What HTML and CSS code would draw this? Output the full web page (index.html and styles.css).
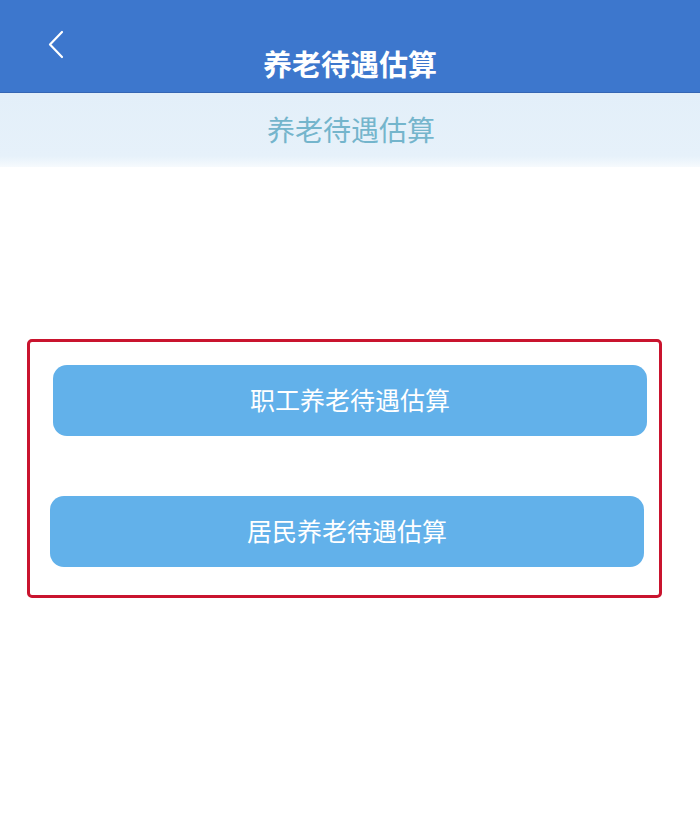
FILE: index.html
```html
<!DOCTYPE html>
<html lang="zh-CN">
<head>
<meta charset="utf-8">
<title>养老待遇估算</title>
<link rel="stylesheet" href="styles.css">
</head>
<body>
<div class="page">
  <header class="topbar">
    <span class="back" aria-label="返回">
      <svg width="20" height="30" viewBox="0 0 20 30"><path d="M16 2 L4 14.5 L16 27" fill="none" stroke="#ffffff" stroke-width="2.2" stroke-linecap="round" stroke-linejoin="round"/></svg>
    </span>
    <h1 class="title">养老待遇估算</h1>
    <span class="spacer"></span>
  </header>
  <div class="band">养老待遇估算</div>
  <main class="content">
    <div class="frame">
      <button class="btn btn-one">职工养老待遇估算</button>
      <button class="btn btn-two">居民养老待遇估算</button>
    </div>
  </main>
</div>
</body>
</html>
```
FILE: styles.css
```css
* { box-sizing: border-box; }
html, body { margin: 0; padding: 0; background: #ffffff; }
body {
  font-family: "Noto Sans CJK SC", "Noto Sans", sans-serif;
  width: 700px;
  height: 840px;
  overflow: hidden;
}
.page { display: flex; flex-direction: column; }
.topbar {
  height: 93px;
  background: #3d77cd;
  border-bottom: 1px solid #3566b4;
  display: grid;
  grid-template-columns: 1fr auto 1fr;
  padding: 30px 0 9px;
}
.back {
  justify-self: start;
  align-self: start;
  margin-left: 46px;
  display: flex;
}
.title {
  margin: 0;
  align-self: end;
  color: #ffffff;
  font-size: 29px;
  font-weight: 700;
  line-height: 40px;
  letter-spacing: 0;
}
.band {
  height: 74px;
  background: linear-gradient(to bottom, #e3eff9 0%, #e6f1fa 85%, #f6fafd 100%);
  color: #74b5cc;
  font-size: 28px;
  line-height: 72px;
  text-align: center;
  padding-left: 2px;
}
.content {
  padding: 172px 0 0 27px;
}
.frame {
  width: 635px;
  height: 259px;
  border: 3px solid #c9142e;
  border-radius: 5px;
  display: flex;
  flex-direction: column;
  padding-top: 23px;
}
.btn {
  height: 71px;
  width: 594px;
  border: none;
  border-radius: 14px;
  background: #62b1ea;
  color: #ffffff;
  font-family: "Noto Sans CJK SC", "Noto Sans", sans-serif;
  font-size: 25px;
  font-weight: 400;
  padding: 0 0 4px;
}
.btn-one { margin-left: 23px; }
.btn-two { margin-left: 20px; margin-top: 60px; }
```
